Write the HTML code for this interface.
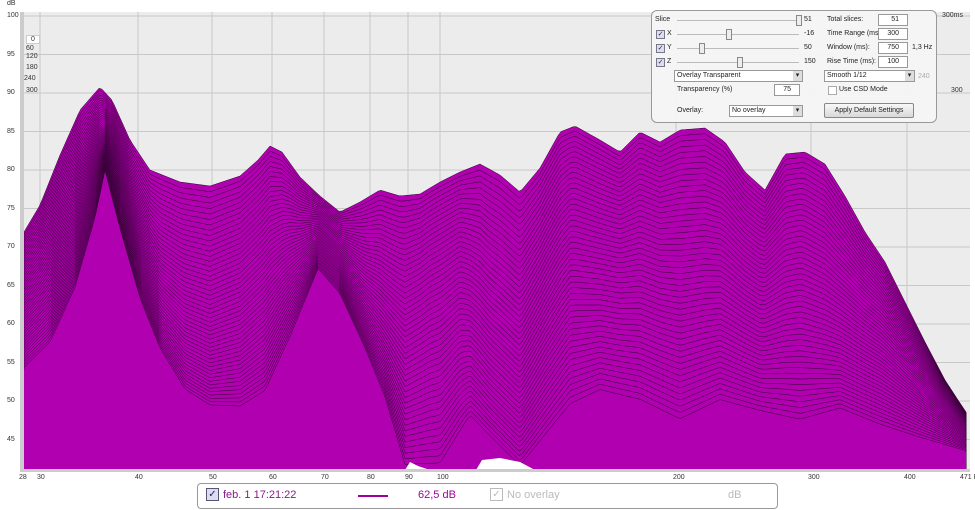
<!DOCTYPE html>
<html><head><meta charset="utf-8"><style>
body{margin:0;width:975px;height:510px;overflow:hidden;background:#fff;font-family:"Liberation Sans",sans-serif;position:relative}
.t{position:absolute;font-size:7px;color:#333;white-space:nowrap}
#panel{position:absolute;left:651px;top:10px;width:284px;height:111px;border:1px solid #999;border-radius:6px;background:rgba(245,245,245,.95);font-size:7px;color:#222}
#panel div{position:absolute;white-space:nowrap}
.cb{width:7px;height:7px;border:1px solid #778;background:#dde;font-size:7px;line-height:7px;text-align:center;color:#226}
.in{background:#fff;border:1px solid #999;height:10px;line-height:10px;text-align:right;padding-right:8px}
.dd{background:#fff;border:1px solid #999;height:10px;line-height:10px;padding-left:2px}
.dd:after{content:"▾";position:absolute;right:0;top:0;width:9px;height:10px;background:#ddd;text-align:center;font-size:7px}
.sl{height:1px;background:#bbb}
.th{width:4px;height:9px;border:1px solid #888;background:#eee}
#leg{position:absolute;left:197px;top:483px;width:579px;height:24px;border:1px solid #999;border-radius:4px;background:#fff;font-size:11px}
#leg div{position:absolute;white-space:nowrap;top:5px}
</style></head><body>
<svg width="975" height="510" style="position:absolute;left:0;top:0">
<rect x="24" y="12" width="946" height="458" fill="#ececec"/>
<g id="grid" stroke="#c8c8c8" stroke-width="1"></g>
<g id="wf"></g>
<rect x="20" y="12" width="4" height="460" fill="#ccc"/>
<rect x="20" y="469" width="950" height="3" fill="#ccc"/>
</svg>
<div class="t" style="left:7px;top:0">dB</div>
<div id="yl"></div>
<div class="t" style="left:26px;top:35px;background:#fff;border:1px solid #ccc;padding:0 4px">0</div>
<div class="t" style="left:26px;top:45px">60</div>
<div class="t" style="left:26px;top:53px">120</div>
<div class="t" style="left:26px;top:64px">180</div>
<div class="t" style="left:24px;top:75px">240</div>
<div class="t" style="left:26px;top:87px">300</div>
<div class="t" style="left:942px;top:12px">300ms</div>
<div class="t" style="left:951px;top:87px">300</div>
<div id="panel">
<div style="left:3px;top:5px">Slice</div>
<div class="sl" style="left:25px;top:9px;width:122px"></div><div class="th" style="left:144px;top:4px"></div><div style="left:152px;top:5px">51</div>
<div class="cb" style="left:4px;top:19px">✓</div><div style="left:15px;top:19px">X</div>
<div class="sl" style="left:25px;top:23px;width:122px"></div><div class="th" style="left:74px;top:18px"></div><div style="left:152px;top:19px">-16</div>
<div class="cb" style="left:4px;top:33px">✓</div><div style="left:15px;top:33px">Y</div>
<div class="sl" style="left:25px;top:37px;width:122px"></div><div class="th" style="left:47px;top:32px"></div><div style="left:152px;top:33px">50</div>
<div class="cb" style="left:4px;top:47px">✓</div><div style="left:15px;top:47px">Z</div>
<div class="sl" style="left:25px;top:51px;width:122px"></div><div class="th" style="left:85px;top:46px"></div><div style="left:152px;top:47px">150</div>
<div class="dd" style="left:22px;top:59px;width:125px">Overlay Transparent</div>
<div style="left:25px;top:75px">Transparency (%)</div>
<div class="in" style="left:122px;top:73px;width:16px">75</div>
<div style="left:25px;top:96px">Overlay:</div>
<div class="dd" style="left:77px;top:94px;width:70px">No overlay</div>
<div style="left:175px;top:5px">Total slices:</div><div class="in" style="left:226px;top:3px;width:20px">51</div>
<div style="left:175px;top:19px">Time Range (ms):</div><div class="in" style="left:226px;top:17px;width:20px">300</div>
<div style="left:175px;top:33px">Window (ms):</div><div class="in" style="left:226px;top:31px;width:20px">750</div><div style="left:260px;top:33px">1,3 Hz</div>
<div style="left:175px;top:47px">Rise Time (ms):</div><div class="in" style="left:226px;top:45px;width:20px">100</div>
<div class="dd" style="left:172px;top:59px;width:87px">Smooth 1/12</div>
<div style="left:266px;top:62px;color:#aaa">240</div>
<div class="cb" style="left:176px;top:75px;background:#fff;border-color:#aaa"></div><div style="left:187px;top:75px">Use CSD Mode</div>
<div style="left:172px;top:92px;width:88px;height:13px;border:1px solid #888;border-radius:2px;background:linear-gradient(#f8f8f8,#d8d8d8);text-align:center;line-height:13px">Apply Default Settings</div>
</div>
<div id="xl"></div>
<div id="leg">
<div style="left:8px;top:4px;width:11px;height:11px;border:1px solid #557;background:#dde;font-size:10px;line-height:11px;text-align:center;color:#226">✓</div>
<div style="left:25px;color:#8a1a8a">feb. 1 17:21:22</div>
<div style="left:160px;top:11px;width:30px;height:2px;background:#a000a0"></div>
<div style="left:220px;color:#a000a0">62,5 dB</div>
<div style="left:292px;top:4px;width:11px;height:11px;border:1px solid #bbb;font-size:10px;line-height:11px;text-align:center;color:#bbb">✓</div>
<div style="left:309px;color:#bbb">No overlay</div>
<div style="left:530px;color:#bbb">dB</div>
</div>
<script>
var yl=document.getElementById('yl'),h='';
var dbs=[100,95,90,85,80,75,70,65,60,55,50,45],g='';
dbs.forEach(function(d,i){var y=16+i*38.5;h+='<div class="t" style="left:7px;top:'+(y-4)+'px">'+d+'</div>';g+='<line x1="24" x2="970" y1="'+y+'" y2="'+y+'"/>';});
yl.innerHTML=h;
var xs=[[28,22],[30,40],[40,138],[50,212],[60,272],[70,324],[80,370],[90,408],[100,440],[200,676],[300,811],[400,907],['471 Hz',963]];
var xh='';xs.forEach(function(a){xh+='<div class="t" style="left:'+(a[1]-3)+'px;top:474px">'+a[0]+'</div>';if(a[1]>30&&a[1]<960)g+='<line y1="12" y2="470" x1="'+a[1]+'" x2="'+a[1]+'"/>';});
document.getElementById('xl').innerHTML=xh;
document.getElementById('grid').innerHTML=g;
var back=[[24,232],[40,205],[60,155],[80,110],[100,87],[112,100],[130,140],[150,170],[180,182],[210,186],[240,176],[258,160],[270,146],[282,152],[300,177],[320,196],[340,212],[360,202],[380,190],[400,196],[420,194],[440,182],[460,172],[480,164],[500,175],[520,192],[540,168],[560,132],[575,126],[600,140],[620,152],[640,132],[660,142],[680,130],[705,128],[725,142],[745,172],[765,190],[785,154],[805,152],[825,164],[845,196],[865,232],[885,262],[905,302],[925,342],[945,380],[958,400],[966,412]];
var mid=[[24,300],[50,270],[75,220],[95,160],[105,140],[120,190],[140,250],[160,300],[185,320],[210,330],[240,310],[265,280],[290,250],[318,235],[340,260],[365,300],[385,320],[405,330],[430,300],[460,280],[490,330],[520,360],[545,300],[570,250],[600,260],[640,260],[680,270],[720,270],[760,300],[800,280],[840,310],[880,330],[920,370],[966,420]];
var front=[[24,370],[50,345],[75,290],[95,220],[105,172],[120,230],[140,300],[160,350],[185,392],[210,408],[240,410],[265,395],[290,340],[318,270],[340,295],[365,350],[385,400],[405,470],[440,470],[470,420],[490,440],[520,470],[545,440],[570,410],[600,395],[640,405],[680,425],[720,405],[760,415],[800,425],[840,412],[880,428],[920,440],[966,452]];
function f(p,x){for(var i=0;i<p.length-1;i++){if(x<=p[i+1][0]){var t=(x-p[i][0])/(p[i+1][0]-p[i][0]);return p[i][1]+t*(p[i+1][1]-p[i][1]);}}return p[p.length-1][1];}
var s='',N=50;
for(var k=N;k>=0;k--){var t=k/N,d='M24,470';
for(var x=24;x<=966;x+=3){var a=f(front,x),b=f(mid,x),c=f(back,x);
var y=(1-t)*(1-t)*a+2*t*(1-t)*b+t*t*c;if(y>470)y=470;d+='L'+x+','+y.toFixed(1);}
d+='L966,470Z';s+='<path d="'+d+'" fill="#b000b0" stroke="#300030" stroke-width="'+(k==0?0:0.5)+'"/>';}
s+='<path d="M405,470 L410,462 L418,466 L430,470Z M476,470 L482,460 L500,458 L520,462 L535,470Z" fill="#fff"/>';
document.getElementById('wf').innerHTML=s;
</script>
</body></html>
